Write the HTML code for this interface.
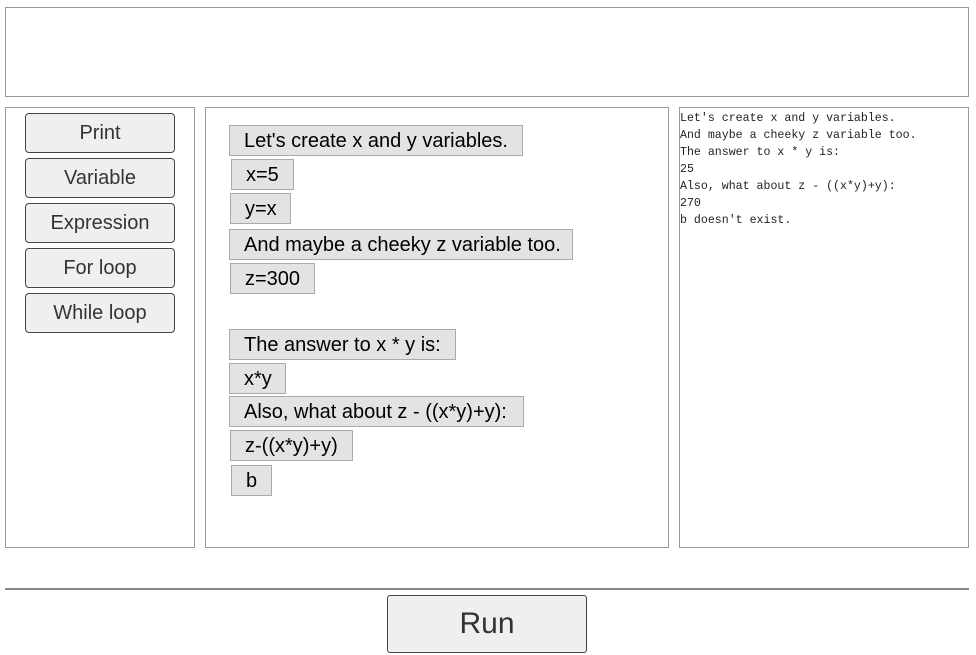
<!DOCTYPE html>
<html><head><meta charset="utf-8"><style>
body{margin:0;width:976px;height:655px;background:#fff;position:relative;font-family:"Liberation Sans",Arial,sans-serif;overflow:hidden}
.box{position:absolute;border:1px solid #999;box-sizing:border-box;background:#fff}
.btn{position:absolute;left:25px;width:150px;height:40px;box-sizing:border-box;border:1px solid #444;border-radius:4px;background:#efefef;color:#333;font-size:20px;text-align:center;line-height:39px}
.c{position:absolute;height:31px;box-sizing:border-box;border:1px solid #aaa;background:#e3e3e3;font-size:20px;line-height:31px;padding-left:14px;color:#000;white-space:nowrap}
.out{position:absolute;left:680px;top:110px;font-family:"Liberation Mono",monospace;font-size:11.6px;line-height:17px;color:#222;white-space:pre}
</style></head><body>
<div class="box" style="left:5px;top:7px;width:964px;height:90px"></div>
<div class="box" style="left:5px;top:107px;width:190px;height:441px"></div>
<div class="box" style="left:205px;top:107px;width:464px;height:441px"></div>
<div class="box" style="left:679px;top:107px;width:290px;height:441px"></div>
<div class="btn" style="top:113px">Print</div>
<div class="btn" style="top:158px">Variable</div>
<div class="btn" style="top:203px">Expression</div>
<div class="btn" style="top:248px">For loop</div>
<div class="btn" style="top:293px">While loop</div>
<div class="c" style="left:229px;top:125px;width:294px">Let's create x and y variables.</div>
<div class="c" style="left:231px;top:159px;width:63px">x=5</div>
<div class="c" style="left:230px;top:193px;width:61px">y=x</div>
<div class="c" style="left:229px;top:229px;width:344px">And maybe a cheeky z variable too.</div>
<div class="c" style="left:230px;top:263px;width:85px">z=300</div>
<div class="c" style="left:229px;top:329px;width:227px">The answer to x * y is:</div>
<div class="c" style="left:229px;top:363px;width:57px">x*y</div>
<div class="c" style="left:229px;top:396px;width:295px">Also, what about z - ((x*y)+y):</div>
<div class="c" style="left:230px;top:430px;width:123px">z-((x*y)+y)</div>
<div class="c" style="left:231px;top:465px;width:41px">b</div>
<div class="out">Let's create x and y variables.
And maybe a cheeky z variable too.
The answer to x * y is:
25
Also, what about z - ((x*y)+y):
270
b doesn't exist.</div>
<div style="position:absolute;left:5px;top:588px;width:964px;height:2px;background:#888"></div>
<div style="position:absolute;left:387px;top:595px;width:200px;height:58px;box-sizing:border-box;border:1px solid #444;border-radius:3px;background:#efefef;color:#333;font-size:30px;text-align:center;line-height:55px">Run</div>
</body></html>
